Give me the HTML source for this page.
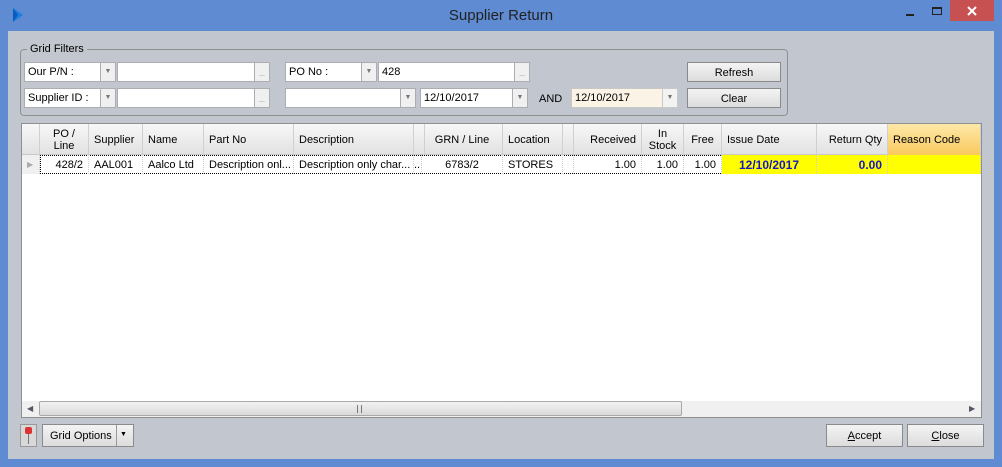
<!DOCTYPE html>
<html><head><style>
*{box-sizing:border-box;margin:0;padding:0}
body{width:1002px;height:467px;background:#5f8bd3;font-family:"Liberation Sans",sans-serif;font-size:11px;color:#000;position:relative;overflow:hidden}
.a{position:absolute}
.client{left:8px;top:31px;width:986px;height:428px;background:#c2c6ce}
.box{position:absolute;background:#fff;border:1px solid #abadb3;height:20px;line-height:19px;padding-left:3px}
.dd{position:absolute;width:16px;height:20px;border:1px solid #abadb3;background:#f0f0f0;font-size:7px;color:#777;text-align:center;line-height:18px}
.btn{position:absolute;border:1px solid #8a8a8a;background:linear-gradient(#f4f4f4,#dcdcdc);text-align:center;line-height:20px;font-size:11px}
.h{position:absolute;top:0;height:31px;border-right:1px solid #d0d0d0;display:flex;align-items:center;padding:0 5px;line-height:12px}
.c{position:absolute;top:0;height:19px;line-height:20px;padding:0 5px;border-right:1px dotted #ccc;white-space:nowrap;overflow:hidden}
</style></head><body>
<svg class="a" style="left:12px;top:8px" width="12" height="15"><polygon points="1,0 11,7 1,14" fill="#1a7fe0"/><polygon points="1,0 6,7 1,14" fill="#0b5bbf"/></svg>
<div class="a" style="left:0;width:1002px;top:7px;text-align:center;font-size:15px;color:#222">Supplier Return</div>
<div class="a" style="left:906px;top:14px;width:8px;height:2px;background:#222"></div>
<div class="a" style="left:932px;top:7px;width:10px;height:8px;border:1px solid #222;border-top-width:2px"></div>
<div class="a" style="left:950px;top:0;width:44px;height:21px;background:#c75050"></div>
<svg class="a" style="left:967px;top:6px" width="10" height="10"><path d="M1 1L9 9M9 1L1 9" stroke="#fff" stroke-width="2"/></svg>
<div class="a client"></div>

<div class="a" style="left:20px;top:49px;width:768px;height:67px;border:1px solid #8f8f8f;border-radius:4px"></div>
<div class="a" style="left:27px;top:43px;background:#c2c6ce;padding:0 3px">Grid Filters</div>

<div class="box" style="left:24px;top:62px;width:77px">Our P/N :</div><div class="dd" style="left:100px;top:62px">▼</div>
<div class="box" style="left:117px;top:62px;width:138px"></div><div class="dd" style="left:254px;top:62px;line-height:24px">...</div>
<div class="box" style="left:24px;top:88px;width:77px">Supplier ID :</div><div class="dd" style="left:100px;top:88px">▼</div>
<div class="box" style="left:117px;top:88px;width:138px"></div><div class="dd" style="left:254px;top:88px;line-height:24px">...</div>
<div class="box" style="left:285px;top:62px;width:77px">PO No :</div><div class="dd" style="left:361px;top:62px">▼</div>
<div class="box" style="left:378px;top:62px;width:137px">428</div><div class="dd" style="left:514px;top:62px;line-height:24px">...</div>
<div class="box" style="left:285px;top:88px;width:116px"></div><div class="dd" style="left:400px;top:88px">▼</div>
<div class="box" style="left:420px;top:88px;width:93px">12/10/2017</div><div class="dd" style="left:512px;top:88px">▼</div>
<div class="a" style="left:539px;top:93px">AND</div>
<div class="box" style="left:571px;top:88px;width:92px;background:#fbf3e6;border-color:#c8c8c8">12/10/2017</div><div class="dd" style="left:662px;top:88px;border-color:#c8c8c8;background:#f3f3f3">▼</div>
<div class="btn" style="left:687px;top:62px;width:94px;height:20px">Refresh</div>
<div class="btn" style="left:687px;top:88px;width:94px;height:20px">Clear</div>

<div class="a" style="left:21px;top:123px;width:961px;height:295px;background:#fff;border:1px solid #8f8f8f"></div>
<div class="a" style="left:22px;top:124px;width:959px;height:31px;background:linear-gradient(#f7f7f7,#e2e2e2);border-bottom:1px solid #c8c8c8">
<div class="h" style="left:0;width:18px"></div>
<div class="h" style="left:18px;width:49px;justify-content:center;text-align:center">PO /<br>Line</div>
<div class="h" style="left:67px;width:54px">Supplier</div>
<div class="h" style="left:121px;width:61px">Name</div>
<div class="h" style="left:182px;width:90px">Part No</div>
<div class="h" style="left:272px;width:120px">Description</div>
<div class="h" style="left:392px;width:8px"></div>
<div class="h" style="left:400px;width:81px;justify-content:center">GRN / Line</div>
<div class="h" style="left:481px;width:60px">Location</div>
<div class="h" style="left:541px;width:8px"></div>
<div class="h" style="left:549px;width:71px;justify-content:flex-end">Received</div>
<div class="h" style="left:620px;width:42px;justify-content:center;text-align:center">In<br>Stock</div>
<div class="h" style="left:662px;width:38px;justify-content:center">Free</div>
<div class="h" style="left:700px;width:95px">Issue Date</div>
<div class="h" style="left:795px;width:71px;justify-content:flex-end">Return Qty</div>
<div class="h" style="left:866px;width:93px;background:linear-gradient(#fde9a8,#f9c85e)">Reason Code</div>
</div>
<div class="a" style="left:22px;top:155px;width:959px;height:19px">
<div class="c" style="left:0;width:18px;background:#f0f0f0;color:#aaa;font-size:8px">▶</div>
<div class="a" style="left:18px;top:0;width:941px;height:19px;border:1px dotted #000"></div>
<div class="c" style="left:18px;width:49px;text-align:right">428/2</div>
<div class="c" style="left:67px;width:54px">AAL001</div>
<div class="c" style="left:121px;width:61px">Aalco Ltd</div>
<div class="c" style="left:182px;width:90px">Description onl...</div>
<div class="c" style="left:272px;width:120px">Description only char...</div>
<div class="c" style="left:392px;width:8px;padding:0">..</div>
<div class="c" style="left:400px;width:81px;text-align:center">6783/2</div>
<div class="c" style="left:481px;width:60px">STORES</div>
<div class="c" style="left:541px;width:8px"></div>
<div class="c" style="left:549px;width:71px;text-align:right">1.00</div>
<div class="c" style="left:620px;width:42px;text-align:right">1.00</div>
<div class="c" style="left:662px;width:38px;text-align:right">1.00</div>
<div class="c" style="left:700px;width:95px;background:#ff0;color:#1515c8;font-weight:bold;font-size:12px;text-align:center">12/10/2017</div>
<div class="c" style="left:795px;width:71px;background:#ff0;color:#1515c8;font-weight:bold;font-size:12px;text-align:right">0.00</div>
<div class="c" style="left:866px;width:93px;background:#ff0"></div>
</div>
<div class="a" style="left:22px;top:401px;width:959px;height:16px;background:#f0f0f0"></div>
<div class="a" style="left:27px;top:404px;font-size:8px;color:#556">◀</div>
<div class="a" style="left:969px;top:404px;font-size:8px;color:#556">▶</div>
<div class="a" style="left:39px;top:401px;width:643px;height:15px;border:1px solid #a8a8a8;border-radius:2px;background:linear-gradient(#f2f2f2,#d9d9d9)"></div>
<div class="a" style="left:357px;top:405px;width:5px;height:8px;border-left:1px solid #777;border-right:1px solid #777"></div>

<div class="a" style="left:20px;top:424px;width:17px;height:23px;border:1px solid #999;background:#d8d8d8"></div>
<div class="a" style="left:25px;top:427px;width:7px;height:7px;background:#d33;border-radius:2px"></div>
<div class="a" style="left:28px;top:434px;width:1px;height:10px;background:#777"></div>
<div class="btn" style="left:42px;top:424px;width:92px;height:23px;line-height:22px;text-align:left;padding-left:7px">Grid Options</div>
<div class="a" style="left:116px;top:425px;width:1px;height:21px;background:#999"></div>
<div class="a" style="left:120px;top:431px;font-size:7px">▼</div>
<div class="btn" style="left:826px;top:424px;width:77px;height:23px;line-height:22px"><u>A</u>ccept</div>
<div class="btn" style="left:907px;top:424px;width:77px;height:23px;line-height:22px"><u>C</u>lose</div>
</body></html>
